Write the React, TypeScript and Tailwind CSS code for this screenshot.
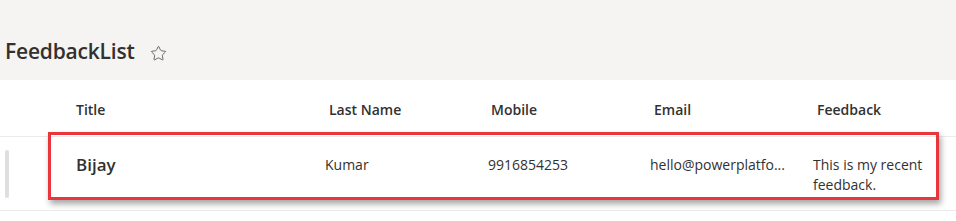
import { Star } from 'lucide-react';

const columns = [
  { label: 'Title', width: 'w-[253px]' },
  { label: 'Last Name', width: 'w-[162px]' },
  { label: 'Mobile', width: 'w-[163px]' },
  { label: 'Email', width: 'w-[163px]' },
  { label: 'Feedback', width: 'flex-1' },
];

export default function App() {
  return (
    <div className="relative w-[956px] h-[221px] bg-white text-[#323130] overflow-hidden" style={{ fontFamily: '"Open Sans", "Noto Sans", Arial, sans-serif' }}>
      {/* List title bar */}
      <div className="h-[80px] bg-[#f5f4f2] flex items-start pt-[36px] pl-[5px] gap-[15px]">
        <h1 className="text-[21px] leading-[30px] font-semibold tracking-[-0.2px]">FeedbackList</h1>
        <Star className="w-[17px] h-[17px] mt-[9px] text-[#605e5c]" strokeWidth={1.3} />
      </div>

      {/* Column headers */}
      <div className="flex h-[57px] items-center pl-[76px] border-b border-[#edebe9]">
        {columns.map((c) => (
          <div key={c.label} className={`${c.width} text-[14px] font-semibold pt-[2px]`}>
            {c.label}
          </div>
        ))}
      </div>

      {/* Row */}
      <div className="flex h-[74px] border-b border-[#edebe9]">
        <div className="w-[72px] pl-[5px] pt-[13px]">
          <div className="w-[4px] h-[48px] rounded-sm bg-[#e1dfdd]" />
        </div>
        <div className="w-[253px] pl-[4px] pt-[16px] text-[17px] leading-[24px] font-semibold">Bijay</div>
        <div className="w-[163px] pt-[18px] text-[14px] leading-[20px]">Kumar</div>
        <div className="w-[162px] pt-[18px] text-[14px] leading-[20px]">9916854253</div>
        <div className="w-[163px] pt-[18px] text-[14px] leading-[20px]">hello@powerplatfo...</div>
        <div className="flex-1 pt-[18px] text-[14px] leading-[20px]">
          <div className="w-[118px]">This is my recent feedback.</div>
        </div>
      </div>

      {/* Highlight annotation */}
      <div className="absolute left-[48px] top-[132px] w-[891px] h-[68px] border-[3px] border-[#e8363c] shadow-[2px_4px_6px_rgba(0,0,0,0.35)] pointer-events-none" />
    </div>
  );
}
